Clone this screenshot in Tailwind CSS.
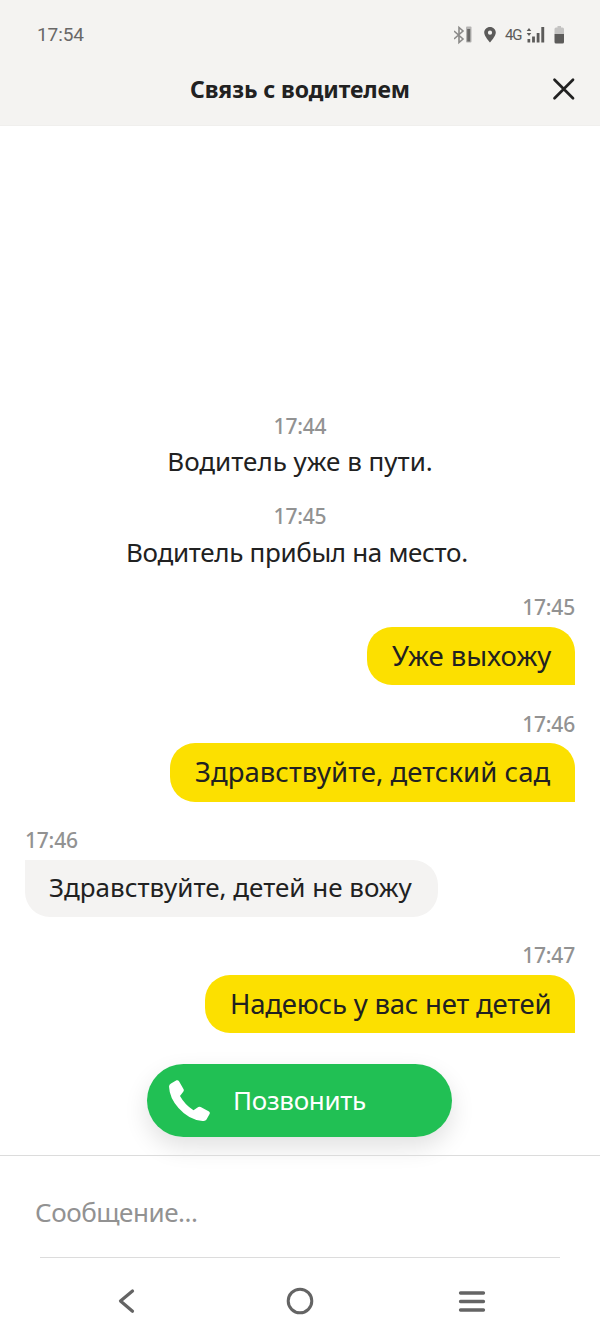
<!DOCTYPE html>
<html lang="ru">
<head>
    <meta charset="UTF-8">
    <meta name="viewport" content="width=device-width, initial-scale=1.0">
    <title>Связь с водителем</title>
    <script src="https://cdn.jsdelivr.net/npm/@tailwindcss/browser@4"></script>
</head>
<body class="bg-white">
<div class="w-[600px] h-[1332px] flex flex-col overflow-hidden font-['Noto_Sans',sans-serif] text-[#212121]">
    <!-- Header -->
    <header class="h-[126px] shrink-0 bg-[#f4f3f1] border-b border-[#f0efed]">
        <div class="h-[68px] pt-px pl-[37px] pr-[35px] flex items-center justify-between text-[#696867]">
            <span class="font-[Roboto] text-[19px] leading-6 tracking-[-0.1px]">17:54</span>
            <div class="flex items-center">
                <!-- Bluetooth with battery -->
                <svg class="w-[20px] h-[20px]" viewBox="0 0 20 20" fill="none">
                    <path d="M0 6L9 14L5 17.500V2.500L9 6L0 14" stroke="#8b8a89" stroke-width="1.600"/>
                    <rect x="12" y="1.500" width="5.500" height="16" rx="1" fill="#b5b4b3"/>
                    <rect x="13.200" y="4" width="3" height="12.500" fill="#696867"/>
                </svg>
                <!-- Location pin -->
                <svg class="w-[12px] h-[20px] ml-[10px]" viewBox="0 0 12 20">
                    <path fill="#5c5b5a" fill-rule="evenodd" d="M6 2C2.7 2 .2 4.500 .2 7.600C.2 11.500 6 17.500 6 17.500S11.800 11.500 11.800 7.600C11.800 4.500 9.300 2 6 2ZM6 5.600A2.100 2.100 0 1 1 6 9.800A2.100 2.100 0 1 1 6 5.600Z"/>
                </svg>
                <span class="font-[Roboto] text-[15px] leading-5 w-[17px] ml-[9px] tracking-[-1.2px] text-[#5c5b5a]">4G</span>
                <!-- Signal bars -->
                <svg class="w-[19px] h-[20px] ml-[4px]" viewBox="0 0 19 20" fill="#5c5b5a">
                    <path d="M.7 6L3 3L5.300 6ZM.7 8L3 11L5.300 8ZM1.500 14H4.200V17.500H1.500ZM6.100 11.500H8.900V17.500H6.100ZM10.700 8H13.500V17.500H10.700ZM15.300 2H18.200V17.500H15.300Z"/>
                </svg>
                <!-- Battery -->
                <svg class="w-[11px] h-[20px] ml-[9px]" viewBox="0 0 11 20">
                    <path fill="#c4c3c2" d="M3.500 1H7V2.500H8.500Q10 2.500 10 4V9H.5V4Q.5 2.500 2 2.500H3.500Z"/>
                    <path fill="#5c5b5a" d="M.5 9H10V17Q10 18.500 8.500 18.500H2Q.5 18.500 .5 17Z"/>
                </svg>
            </div>
        </div>
        <div class="h-11 px-6 grid grid-cols-[24px_1fr_24px] items-center">
            <span></span>
            <h1 class="-mt-[2px] text-center text-[23px] leading-8 font-bold tracking-[-0.1px] whitespace-nowrap">Связь с водителем</h1>
            <button class="-mt-[2px]" aria-label="Закрыть">
                <svg class="w-6 h-6" viewBox="0 0 24 24" fill="none" stroke="#212121" stroke-width="2.700" stroke-linecap="round"><path d="M2.500 2.800L21 21.300M2.500 21.300L21 2.800"/></svg>
            </button>
        </div>
    </header>

    <!-- Messages -->
    <main class="h-[1029px] shrink-0 pt-[286px] px-[25px] flex flex-col text-[26px]">
        <time class="self-center text-[21px] leading-7 font-medium tracking-[-0.2px] text-[#929292]">17:44</time>
        <p class="self-center leading-[42px] mb-[2px] whitespace-nowrap">Водитель уже в пути.</p>

        <time class="self-center mt-[18px] text-[21px] leading-7 font-medium tracking-[-0.2px] text-[#929292]">17:45</time>
        <p class="self-center leading-[44px] mb-[2px] w-[348px] tracking-[-0.32px] whitespace-nowrap">Водитель прибыл на место.</p>

        <time class="self-end mt-[17px] text-[21px] leading-7 font-medium tracking-[-0.2px] text-[#929292]">17:45</time>
        <p class="self-end mt-[6px] h-[58px] w-[208px] rounded-[25px] rounded-br-none bg-[#fce000] pl-[25px] text-[27.5px] leading-[57px] whitespace-nowrap">Уже выхожу</p>

        <time class="self-end mt-[25px] text-[21px] leading-7 font-medium tracking-[-0.2px] text-[#929292]">17:46</time>
        <p class="self-end mt-[5px] h-[59px] w-[405px] rounded-[25px] rounded-br-none bg-[#fce000] pl-[25px] text-[27.5px] leading-[58px] tracking-[0.05px] whitespace-nowrap">Здравствуйте, детский сад</p>

        <time class="self-start mt-[24px] text-[21px] leading-7 font-medium tracking-[-0.2px] text-[#929292]">17:46</time>
        <p class="self-start mt-[6px] h-[57px] w-[413px] rounded-[25px] rounded-tl-none bg-[#f4f3f2] pl-[24px] leading-[54px] whitespace-nowrap">Здравствуйте, детей не вожу</p>

        <time class="self-end mt-[24px] text-[21px] leading-7 font-medium tracking-[-0.2px] text-[#929292]">17:47</time>
        <p class="self-end mt-[6px] h-[58px] w-[370px] rounded-[25px] rounded-br-none bg-[#fce000] pl-[25px] text-[27.5px] leading-[57px] tracking-[-0.2px] whitespace-nowrap">Надеюсь у вас нет детей</p>

        <button class="self-center mt-[31px] mr-px h-[73px] w-[305px] rounded-full bg-[#21c054] shadow-[0_10px_24px_rgba(0,0,0,0.12)] pl-[22px] flex items-center text-white">
            <svg class="w-[41px] h-[41px]" viewBox="0 0 41 41" fill="currentColor"><path d="M2 3.500L7.500 .3Q9 -.3 10 1.200L14.600 9.300Q15.200 10.600 14.200 11.800L11 16Q16 25 24.500 30.200L29.300 27Q30.500 26.400 31.700 27L40 31.600Q41.200 32.400 40.700 33.800L37.500 39.600Q36.500 41.200 33.500 41Q20 40 9.500 28Q.5 18 0 6.500Q.1 4.600 2 3.500Z"/></svg>
            <span class="ml-[23px] tracking-[-0.3px] whitespace-nowrap">Позвонить</span>
        </button>
    </main>

    <!-- Message field -->
    <div class="h-[103px] shrink-0 border-t border-[#dcdcdc] px-[35px] relative">
        <p class="pt-[34px] text-[26px] leading-[44px] tracking-[-0.45px] text-[#929292]">Сообщение...</p>
        <div class="absolute bottom-0 left-10 right-10 h-px bg-[#dcdcdc]"></div>
    </div>

    <!-- System navigation -->
    <nav class="h-[74px] flex items-center justify-between pt-[12px] pl-[112px] pr-[114px]">
        <svg class="w-7 h-7" viewBox="0 0 28 28" fill="none" stroke="#646464" stroke-width="3.200" stroke-linecap="round" stroke-linejoin="round"><path d="M20.500 4L8.500 14L20.500 24.300"/></svg>
        <svg class="w-7 h-7 ml-[2px]" viewBox="0 0 28 28" fill="none" stroke="#646464" stroke-width="3"><circle cx="14" cy="14" r="11.800"/></svg>
        <svg class="w-7 h-7" viewBox="0 0 28 28" fill="none" stroke="#646464" stroke-width="3.300" stroke-linecap="round"><path d="M2.500 6H25.500M2.500 14.500H25.500M2.500 23H25.500"/></svg>
    </nav>
</div>
</body>
</html>
